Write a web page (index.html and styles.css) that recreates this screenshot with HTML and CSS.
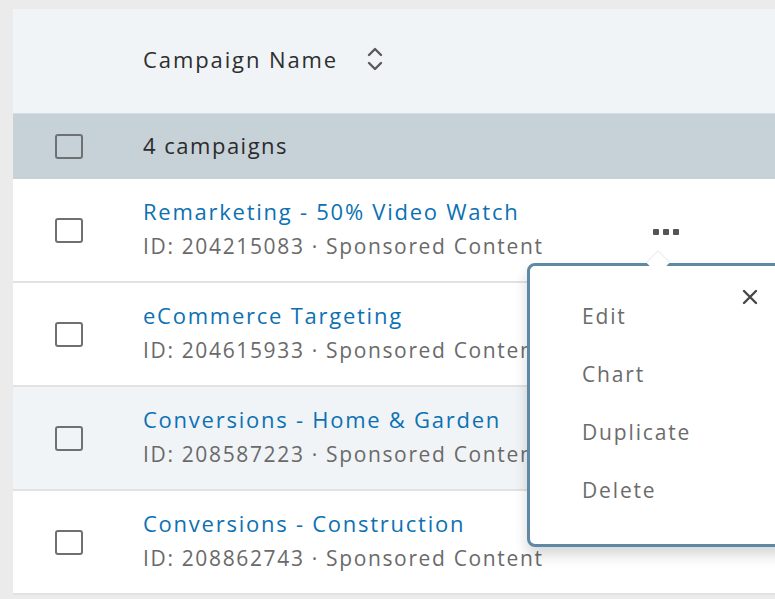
FILE: index.html
```html
<!DOCTYPE html>
<html lang="en">
<head>
<meta charset="utf-8">
<title>Campaigns</title>
<link rel="stylesheet" href="styles.css">
</head>
<body>
<div class="table">
  <div class="row head">
    <div class="cell-check"></div>
    <div class="col-title">
      <span>Campaign Name</span>
      <svg class="sort" width="18" height="26" viewBox="0 0 18 26" aria-hidden="true">
        <path d="M3 9 L9 3 L15 9" fill="none" stroke="#5a5a5a" stroke-width="2.4" stroke-linecap="round" stroke-linejoin="round"/>
        <path d="M3 17 L9 23 L15 17" fill="none" stroke="#5a5a5a" stroke-width="2.4" stroke-linecap="round" stroke-linejoin="round"/>
      </svg>
    </div>
  </div>

  <div class="row group">
    <div class="cell-check"><span class="box"></span></div>
    <div class="group-label">4 campaigns</div>
  </div>

  <div class="row item">
    <div class="cell-check"><span class="box"></span></div>
    <div class="info">
      <a class="name" href="#">Remarketing - 50% Video Watch</a>
      <div class="meta">ID: 204215083 · Sponsored Content</div>
    </div>
    <div class="actions"><span class="dot"></span><span class="dot"></span><span class="dot"></span></div>
  </div>

  <div class="row item">
    <div class="cell-check"><span class="box"></span></div>
    <div class="info">
      <a class="name" href="#">eCommerce Targeting</a>
      <div class="meta">ID: 204615933 · Sponsored Content</div>
    </div>
  </div>

  <div class="row item hover">
    <div class="cell-check"><span class="box"></span></div>
    <div class="info">
      <a class="name" href="#">Conversions - Home &amp; Garden</a>
      <div class="meta">ID: 208587223 · Sponsored Content</div>
    </div>
  </div>

  <div class="row item">
    <div class="cell-check"><span class="box"></span></div>
    <div class="info">
      <a class="name" href="#">Conversions - Construction</a>
      <div class="meta">ID: 208862743 · Sponsored Content</div>
    </div>
  </div>

  <div class="menu">
    <span class="menu-arrow"></span>
    <button class="menu-close" type="button" aria-label="Close">
      <svg width="16" height="16" viewBox="0 0 16 16" aria-hidden="true">
        <path d="M2 2 L14 14 M14 2 L2 14" stroke="#474747" stroke-width="2.4" stroke-linecap="round"/>
      </svg>
    </button>
    <ul class="menu-list">
      <li>Edit</li>
      <li>Chart</li>
      <li>Duplicate</li>
      <li>Delete</li>
    </ul>
  </div>
</div>
</body>
</html>
```

FILE: styles.css
```css
html, body {
  margin: 0;
  padding: 0;
  overflow: hidden;
}

body {
  background: #ebebeb;
  padding: 9px 0 0 13px;
  font-family: "Open Sans", "Noto Sans", sans-serif;
  height: 599px;
  box-sizing: border-box;
}

.table {
  position: relative;
  width: 800px;
  background: #ffffff;
  display: flex;
  flex-direction: column;
}

.row {
  display: grid;
  grid-template-columns: 130px 497px 1fr;
  align-items: center;
}

.head {
  height: 104px;
  background: #f1f4f7;
}

.col-title {
  display: flex;
  align-items: center;
  gap: 28px;
  font-size: 22px;
  letter-spacing: 1.9px;
  color: #2e2e2e;
  margin-top: -5px;
}

.group {
  height: 66px;
  background: #c7d1d8;
  border-top: 1px solid #d6dde2;
  box-sizing: border-box;
}

.group-label {
  font-size: 22px;
  letter-spacing: 1.5px;
  color: #2b2b2b;
  margin-top: -3px;
}

.cell-check {
  display: flex;
  align-items: center;
  padding-left: 42px;
}

.box {
  width: 24px;
  height: 21px;
  border: 2px solid #6e7174;
  border-radius: 3px;
  background: transparent;
}

.item {
  height: 104px;
  border-bottom: 2px solid #e2e2e2;
  box-sizing: border-box;
}

.item.hover {
  background: #f1f4f7;
}

.info {
  display: flex;
  flex-direction: column;
  line-height: 35px;
  margin-top: -2px;
}

.name {
  font-size: 22px;
  letter-spacing: 1.75px;
  color: #0c71b3;
  text-decoration: none;
}

.meta {
  font-size: 21px;
  letter-spacing: 1.65px;
  color: #6a6a6a;
  white-space: nowrap;
}

.actions {
  display: flex;
  gap: 4px;
  padding-left: 13px;
  margin-top: 3px;
}

.dot {
  width: 6px;
  height: 6px;
  border-radius: 1px;
  background: #555555;
}

/* overflow menu opened from the first row */
.menu {
  position: absolute;
  left: 514px;
  top: 254px;
  width: 290px;
  height: 284px;
  box-sizing: border-box;
  background: #ffffff;
  border: 3px solid #5f88a4;
  border-radius: 8px;
  box-shadow: 0 8px 14px rgba(0, 0, 0, 0.16);
}

.menu-arrow {
  position: absolute;
  left: 120px;
  top: -11px;
  width: 16px;
  height: 16px;
  background: #ffffff;
  transform: rotate(45deg);
  box-shadow: -1px -1px 1px rgba(0, 0, 0, 0.08);
}

.menu-close {
  position: absolute;
  left: 212px;
  top: 23px;
  padding: 0;
  border: 0;
  background: none;
  display: flex;
}

.menu-list {
  list-style: none;
  margin: 0;
  padding: 32px 0 0 52px;
  font-size: 21px;
  letter-spacing: 1.85px;
  color: #6b6b6b;
  line-height: 36px;
  display: flex;
  flex-direction: column;
  gap: 22px;
}
```
